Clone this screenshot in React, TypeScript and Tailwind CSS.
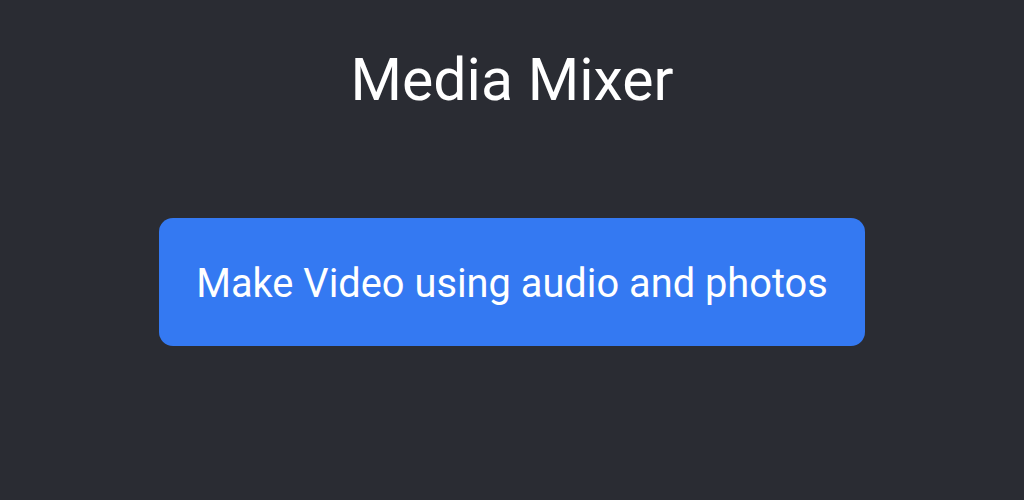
export default function App() {
  return (
    <div className="w-[1024px] h-[500px] bg-[#2a2c33] flex flex-col items-center" style={{ fontFamily: 'Roboto, sans-serif' }}>
      <h1 className="mt-[44px] text-[59px] leading-[72px] text-white font-normal">Media Mixer</h1>
      <button className="mt-[102px] w-[706px] h-[128px] rounded-[14px] bg-[#3479f2] text-white text-[39.8px] font-normal pt-[4px]">
        Make Video using audio and photos
      </button>
    </div>
  );
}
